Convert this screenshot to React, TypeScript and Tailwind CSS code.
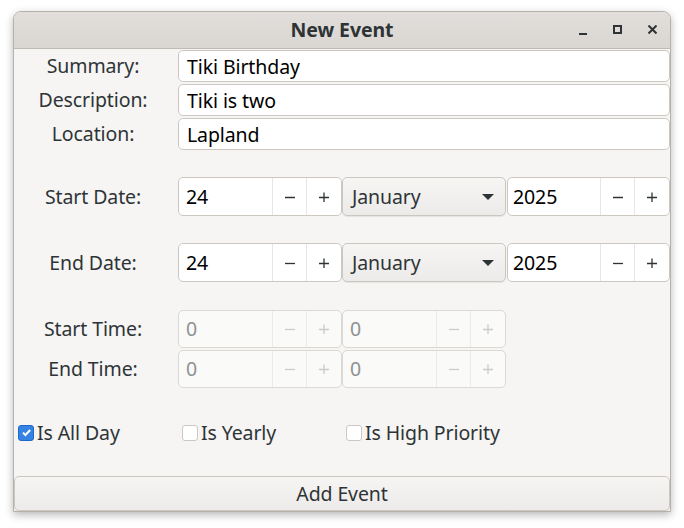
const FONT = { fontFamily: '"Noto Sans", "Open Sans", sans-serif' };

function Minus({ dim }: { dim?: boolean }) {
  return (
    <svg width="10" height="10" viewBox="0 0 10 10">
      <path d="M0 5.5h10" stroke={dim ? "#c9cccc" : "#2e3436"} strokeWidth="1.3" />
    </svg>
  );
}

function Plus({ dim }: { dim?: boolean }) {
  return (
    <svg width="10" height="10" viewBox="0 0 10 10">
      <path d="M0 5.5h10M5 0.5v10" stroke={dim ? "#c9cccc" : "#2e3436"} strokeWidth="1.3" />
    </svg>
  );
}

function Spin({
  value,
  disabled,
  field = 93,
  pad = 7,
}: {
  value: string;
  disabled?: boolean;
  field?: number;
  pad?: number;
}) {
  const box = disabled
    ? "border-[#dcd8d4] bg-[#fafaf9] text-[#8e9192]"
    : "border-[#cdc7c2] bg-white text-[#000]";
  const div = disabled ? "border-[#ecebe9]" : "border-[#e8e6e3]";
  return (
    <div className={`flex h-full rounded-[5px] border ${box}`}>
      <div className="flex items-center" style={{ width: field, paddingLeft: pad }}>
        {value}
      </div>
      <div className={`flex w-[34px] items-center justify-center border-l ${div}`}>
        <Minus dim={disabled} />
      </div>
      <div className={`flex flex-1 items-center justify-center border-l ${div}`}>
        <Plus dim={disabled} />
      </div>
    </div>
  );
}

function Combo() {
  return (
    <div className="flex h-full items-center justify-between rounded-[5px] border border-[#cdc7c2] bg-gradient-to-b from-[#f6f5f4] to-[#edebe9] pl-[9px] pr-[11px] text-[#2e3436] shadow-[0_1px_1px_rgba(0,0,0,0.07)]">
      <span>January</span>
      <svg width="12" height="6" viewBox="0 0 12 6">
        <path d="M0 0h12L6 6z" fill="#2e3436" />
      </svg>
    </div>
  );
}

function Check({ on }: { on?: boolean }) {
  return on ? (
    <span className="flex h-[16px] w-[16px] shrink-0 items-center justify-center rounded-[3px] border border-[#1b6acb] bg-[#3584e4]">
      <svg width="11" height="11" viewBox="0 0 11 11">
        <path d="M2 5.6l2.4 2.4 4.8-5" stroke="white" strokeWidth="2" fill="none" />
      </svg>
    </span>
  ) : (
    <span className="h-[16px] w-[16px] shrink-0 rounded-[3px] border border-[#cdc7c2] bg-white" />
  );
}

export default function App() {
  const labelCls = "flex items-center justify-center pr-[6px] text-[#2e3436]";
  const entryCls =
    "col-span-3 flex h-[32px] items-center rounded-[5px] border border-[#cdc7c2] bg-white pl-[8px] pt-[1px] text-[#000]";
  return (
    <div className="h-[528px] w-[684px] bg-white pl-[13px] pt-[11px] text-[19.5px] tracking-[-0.1px]" style={FONT}>
      <div className="flex h-[501px] w-[658px] flex-col overflow-hidden rounded-t-[8px] border border-[#b7b1ab] bg-[#f6f5f4] shadow-[0_3px_9px_rgba(0,0,0,0.28)]">
        <div className="relative flex h-[37px] shrink-0 items-center justify-center border-b border-[#c0bab4] bg-gradient-to-b from-[#e1dedb] to-[#dad6d2]">
          <span className="text-[19.5px] font-bold text-[#2e3436]">New Event</span>
          <div className="absolute right-[13px] top-0 flex h-full items-center gap-[26px]">
            <svg width="8" height="10" viewBox="0 0 8 10">
              <path d="M0 9h8" stroke="#2e3436" strokeWidth="2" />
            </svg>
            <svg width="9" height="10" viewBox="0 0 9 10">
              <rect x="1" y="1" width="7" height="7" stroke="#2e3436" strokeWidth="2" fill="none" />
            </svg>
            <svg width="9" height="10" viewBox="0 0 9 10">
              <path d="M0.5 0.5l8 8M8.5 0.5l-8 8" stroke="#2e3436" strokeWidth="2" />
            </svg>
          </div>
        </div>

        <div className="grid grid-cols-[164px_164px_164px_164px] gap-y-[2px] pt-[1px]">
          <div className={labelCls}>Summary:</div>
          <div className={entryCls}>Tiki Birthday</div>
          <div className={labelCls}>Description:</div>
          <div className={entryCls}>Tiki is two</div>
          <div className={labelCls}>Location:</div>
          <div className={entryCls}>Lapland</div>
        </div>

        <div className="mt-[27px] grid h-[39px] grid-cols-[164px_164px_164px_164px]">
          <div className={labelCls}>Start Date:</div>
          <Spin value="24" />
          <div>
            <Combo />
          </div>
          <div className="pl-[1px]">
            <Spin value="2025" field={92} pad={5} />
          </div>
        </div>

        <div className="mt-[27px] grid h-[39px] grid-cols-[164px_164px_164px_164px]">
          <div className={labelCls}>End Date:</div>
          <Spin value="24" />
          <div>
            <Combo />
          </div>
          <div className="pl-[1px]">
            <Spin value="2025" field={92} pad={5} />
          </div>
        </div>

        <div className="mt-[28px] grid grid-cols-[164px_164px_164px_164px] gap-y-[2px]">
          <div className={labelCls}>Start Time:</div>
          <div className="h-[38px]">
            <Spin value="0" disabled />
          </div>
          <div className="h-[38px]">
            <Spin value="0" disabled />
          </div>
          <div />
          <div className={labelCls}>End Time:</div>
          <div className="h-[38px]">
            <Spin value="0" disabled />
          </div>
          <div className="h-[38px]">
            <Spin value="0" disabled />
          </div>
          <div />
        </div>

        <div className="mt-[30px] grid h-[24px] grid-cols-[164px_164px_164px_164px] text-[#2e3436]">
          <div className="flex items-center gap-[3px] pl-[4px]">
            <Check on />
            <span>Is All Day</span>
          </div>
          <div className="flex items-center gap-[3px] pl-[4px]">
            <Check />
            <span>Is Yearly</span>
          </div>
          <div className="flex items-center gap-[3px] pl-[4px]">
            <Check />
            <span>Is High Priority</span>
          </div>
        </div>

        <div className="mt-auto flex h-[35px] items-center justify-center rounded-[5px] border border-[#cdc7c2] bg-gradient-to-b from-[#f6f5f4] to-[#edebe9] text-[#2e3436] shadow-[0_1px_1px_rgba(0,0,0,0.07)]">
          Add Event
        </div>
      </div>
    </div>
  );
}
